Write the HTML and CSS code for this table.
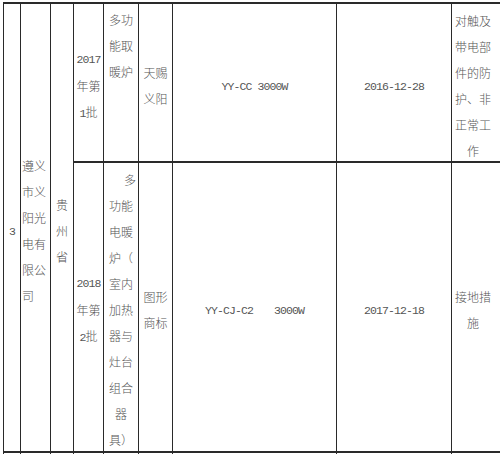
FILE: index.html
```html
<!DOCTYPE html>
<html lang="zh-CN">
<head>
<meta charset="utf-8">
<title>产品召回表</title>
<link rel="stylesheet" href="styles.css">
</head>
<body>
<div class="sheet">
  <div class="cell span2 mid"><div class="txt"><span class="lat">3</span></div></div>
  <div class="cell span2 mid left"><div class="txt">遵义<br>市义<br>阳光<br>电有<br>限公<br>司</div></div>
  <div class="cell span2 mid"><div class="txt">贵<br>州<br>省</div></div>

  <div class="cell mid"><div class="txt"><span class="lat">2017</span><br>年第<br><span class="lat">1</span>批</div></div>
  <div class="cell top"><div class="txt">多功<br>能取<br>暖炉</div></div>
  <div class="cell mid"><div class="txt">天赐<br>义阳</div></div>
  <div class="cell mid"><div class="txt"><span class="lat">YY-CC 3000W</span></div></div>
  <div class="cell mid"><div class="txt"><span class="lat">2016-12-28</span></div></div>
  <div class="cell mid last"><div class="txt">对触及<br>带电部<br>件的防<br>护、非<br>正常工<br>作</div></div>

  <div class="cell mid"><div class="txt"><span class="lat">2018</span><br>年第<br><span class="lat">2</span>批</div></div>
  <div class="cell mid"><div class="txt lines"><span class="first">多</span>功能<br>电暖<br>炉（<br>室内<br>加热<br>器与<br>灶台<br>组合<br>器<br>具）</div></div>
  <div class="cell mid"><div class="txt">图形<br>商标</div></div>
  <div class="cell mid"><div class="txt"><span class="lat">YY-CJ-C2<span class="gap">3000W</span></span></div></div>
  <div class="cell mid"><div class="txt"><span class="lat">2017-12-18</span></div></div>
  <div class="cell mid last"><div class="txt">接地措<br>施</div></div>

  <div class="cell"></div>
  <div class="cell"></div>
  <div class="cell"></div>
  <div class="cell"></div>
  <div class="cell"></div>
  <div class="cell"></div>
  <div class="cell"></div>
  <div class="cell"></div>
  <div class="cell"></div>
</div>
</body>
</html>
```
FILE: styles.css
```css
html, body {
  margin: 0;
  padding: 0;
  background: #ffffff;
  overflow: hidden;
}

body {
  width: 500px;
  height: 454px;
  font-family: "Noto Sans CJK SC", "Noto Sans", sans-serif;
  font-size: 12px;
  font-weight: 300;
  color: #555555;
}

.sheet {
  display: grid;
  grid-template-columns: 16px 29px 22px 29px 34px 33px 163px 114px 60px;
  grid-template-rows: 157px 288px 20px;
  column-gap: 1px;
  row-gap: 2px;
  padding: 2px 0 0 1px;
  margin: 2px 0 0 3px;
  width: max-content;
  background: #2a2a2a;
}

.cell {
  background: #ffffff;
  display: flex;
  justify-content: center;
  min-width: 0;
}

.txt {
  text-align: center;
  line-height: 26px;
  white-space: nowrap;
}

.span2 {
  grid-row: span 2;
}

.mid {
  align-items: center;
  padding-top: 6px;
}

.top {
  align-items: flex-start;
  padding-top: 3px;
}

.left {
  justify-content: flex-start;
  padding-left: 1px;
}

.left .txt {
  text-align: left;
}

.last {
  justify-content: flex-start;
  padding-left: 2px;
}

.last .txt {
  width: 38px;
}

.lines {
  width: 24px;
}

.first {
  display: block;
  text-align: right;
  margin-right: -3px;
}

.lat {
  font-family: "Liberation Mono", monospace;
  font-size: 11.5px;
  letter-spacing: -0.9px;
  font-weight: 400;
}

.gap {
  margin-left: 21px;
}
```
